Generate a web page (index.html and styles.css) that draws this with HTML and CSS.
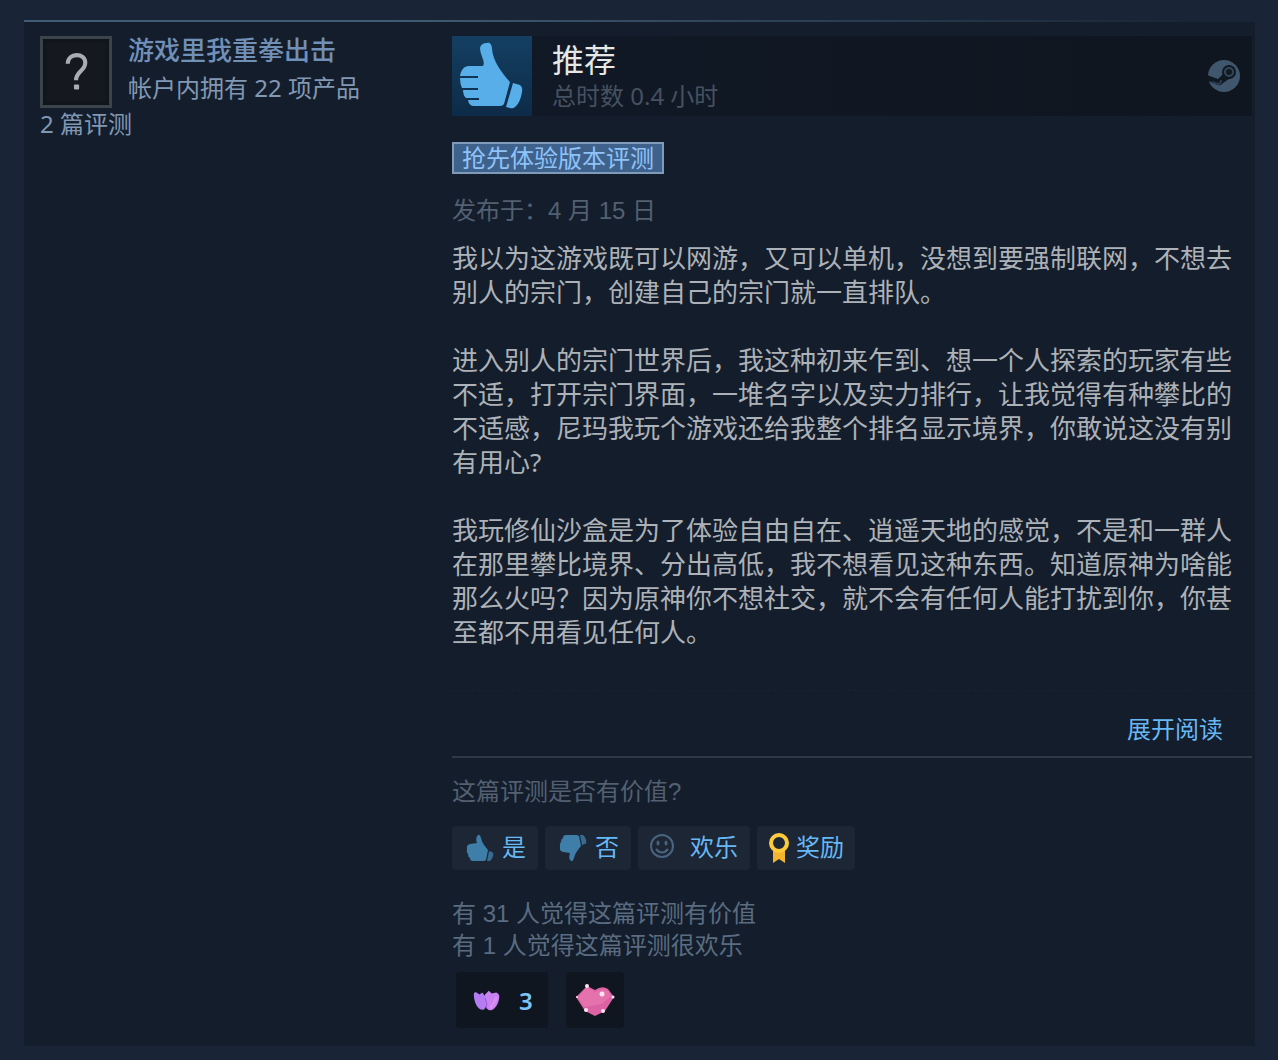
FILE: index.html
```html
<!DOCTYPE html>
<html lang="zh-CN">
<head>
  <meta charset="utf-8">
  <title>评测</title>
  <link rel="stylesheet" href="styles.css">
</head>
<body>
<svg width="0" height="0" class="defs">
  <symbol id="thumb" viewBox="0 0 80 80">
    <path d="M35 7C38 6 40 9 40 13C41 25 49 36 58 46L52 68Q51 70 48 70H22Q17 70 16 64H27V62H14Q11 59 11 54H26V52H10Q8 48 8 42H26V40H8C9 34 12 30 17 30H31C34 26 28 19 28 12Q29 7 35 7Z"/>
    <path d="M61 47L68 49Q71 51 70 56C69 63 66 69 63 71Q61 73 58 72L54 71Z"/>
  </symbol>
  <symbol id="thumb-small" viewBox="0 0 32 32">
    <path d="M14 3Q16 2 17 6C18 11 21 14 24 18L22 28Q21 29 19 29H9Q6 29 6 26Q4 25 4 22Q2 20 3 17Q2 13 6 12L13 11Q11 6 14 3Z"/>
    <path d="M25 19L28 20Q30 21 29 24Q28 28 26 29L23 29Z" opacity="0.8"/>
  </symbol>
</svg>

<div class="review">
  <div class="author">
    <a class="avatar" href="#" aria-label="头像">
      <svg viewBox="0 0 64 64">
        <path d="M24 24C24 13 41 13 41 23C41 31 32 31 32 40" fill="none" stroke="#a9adb3" stroke-width="4"/>
        <rect x="30" y="44" width="5" height="5" rx="1" fill="#a9adb3"/>
      </svg>
    </a>
    <a class="name" href="#">游戏里我重拳出击</a>
    <a class="owned" href="#">帐户内拥有 22 项产品</a>
    <a class="count" href="#">2 篇评测</a>
  </div>

  <div class="main">
    <a class="header" href="#">
      <svg class="thumb-big" viewBox="0 0 80 80"><use href="#thumb"/></svg>
      <div class="header-text">
        <div class="title">推荐</div>
        <div class="hours">总时数 0.4 小时</div>
      </div>
      <svg class="steam" viewBox="0 0 34 34">
        <circle cx="17" cy="17" r="16" fill="#40566c"/>
        <path d="M0 16L11 20L16 15L25 18L16 24Q13 28 9 25L1 22Z" fill="#101822"/>
        <circle cx="22" cy="13" r="7" fill="#101822"/>
        <circle cx="22" cy="13" r="4" fill="none" stroke="#33475b" stroke-width="2"/>
        <path d="M5 23L11 25Q14 25 14 21" fill="none" stroke="#2a3b4c" stroke-width="2"/>
      </svg>
    </a>

    <div class="early-access">抢先体验版本评测</div>
    <div class="posted">发布于：4 月 15 日</div>

    <div class="content">
      <p>我以为这游戏既可以网游，又可以单机，没想到要强制联网，不想去别人的宗门，创建自己的宗门就一直排队。</p>
      <p>进入别人的宗门世界后，我这种初来乍到、想一个人探索的玩家有些不适，打开宗门界面，一堆名字以及实力排行，让我觉得有种攀比的不适感，尼玛我玩个游戏还给我整个排名显示境界，你敢说这没有别有用心?</p>
      <p>我玩修仙沙盒是为了体验自由自在、逍遥天地的感觉，不是和一群人在那里攀比境界、分出高低，我不想看见这种东西。知道原神为啥能那么火吗？因为原神你不想社交，就不会有任何人能打扰到你，你甚至都不用看见任何人。</p>
    </div>

    <div class="more"><a href="#">展开阅读</a></div>

    <div class="question">这篇评测是否有价值?</div>
    <div class="votes">
      <button type="button"><svg class="icon" viewBox="0 0 32 32"><use href="#thumb-small"/></svg>是</button>
      <button type="button"><svg class="icon down" viewBox="0 0 32 32"><use href="#thumb-small"/></svg>否</button>
      <button type="button" class="funny">
        <svg class="icon" viewBox="0 0 32 32">
          <g fill="none" stroke="#49647e" stroke-width="2">
            <circle cx="16" cy="14" r="11"/>
            <path d="M10 17Q16 24 22 17"/>
          </g>
          <ellipse cx="12" cy="11" rx="1.5" ry="2.5" fill="#49647e"/>
          <ellipse cx="20" cy="11" rx="1.5" ry="2.5" fill="#49647e"/>
        </svg>欢乐
      </button>
      <button type="button" class="award">
        <svg class="icon" viewBox="0 0 22 32">
          <path d="M5 18H17V31L11 27L5 31Z" fill="#f3b52e"/>
          <circle cx="11" cy="11" r="8" fill="#1c2635" stroke="#ffc93c" stroke-width="4"/>
        </svg>奖励
      </button>
    </div>

    <div class="stats">有 31 人觉得这篇评测有价值<br>有 1 人觉得这篇评测很欢乐</div>

    <div class="awards">
      <button type="button" class="given" aria-label="3 个奖励">
        <svg viewBox="0 0 32 32">
          <path d="M3 10Q3 7 6 8L9 10L12 8Q15 11 16 15Q18 22 14 26C8 28 3 19 3 10Z" fill="#b57cf2"/>
          <path d="M15 10L19 6L22 9L27 8Q31 10 30 14C29 21 25 27 20 27C15 26 14 17 15 10Z" fill="#c682f2"/>
          <path d="M20 25Q25 20 27 13" fill="none" stroke="#dc8df0" stroke-width="3"/>
          <path d="M15 14Q18 20 16 25" fill="none" stroke="#8f55cc"/>
        </svg>
        <span>3</span>
      </button>
      <button type="button" class="given" aria-label="1 个奖励">
        <svg class="heart" viewBox="0 0 40 34">
          <path d="M1 14L12 3L20 7Q27 2 33 6L39 14L30 28L20 33L10 28Z" fill="#dc62a4"/>
          <path d="M3 14L12 4L20 9Q27 4 33 8L36 13L27 21L9 24Z" fill="#e672ad"/>
          <g fill="#ffe3f2">
            <circle cx="2" cy="14" r="1"/><circle cx="12" cy="3" r="2"/><circle cx="27" cy="11" r="2.5"/>
            <circle cx="38" cy="14" r="1.5"/><circle cx="11" cy="27" r="2"/><circle cx="28" cy="28" r="2"/>
          </g>
        </svg>
      </button>
    </div>
  </div>
</div>
</body>
</html>
```

FILE: styles.css
```css
body {
  margin: 0;
  padding: 20px 23px 14px 24px;
  background-color: #192536;
  font-family: "Noto Sans", "Noto Sans CJK SC", sans-serif;
  font-size: 24px;
  line-height: 32px;
  color: #8198b5;
}

a {
  color: inherit;
  text-decoration: none;
}

svg {
  display: block;
  flex-shrink: 0;
}

.defs {
  position: absolute;
}

.review {
  display: grid;
  grid-template-columns: 412px 1fr;
  padding: 14px 3px 18px 16px;
  border-top: 2px solid;
  border-image: linear-gradient(to right, #405b73 30%, #192536 95%) 1;
  background-color: #141d2b;
}

.author {
  display: grid;
  grid-template-columns: 72px 1fr;
  grid-template-rows: 32px 40px 34px;
  column-gap: 16px;
  align-content: start;
}

.avatar {
  grid-row: 1 / 3;
  box-sizing: border-box;
  height: 72px;
  border: 3px solid #3b444c;
  background-color: #15191f;
  box-shadow: inset 0 0 4px #0a0e13;
}

.name {
  font-size: 26px;
  line-height: 28px;
  font-weight: 500;
  color: #7190b8;
}

.owned {
  line-height: 40px;
}

.count {
  grid-column: 1 / 3;
}

.header {
  display: flex;
  height: 80px;
  background: linear-gradient(to right, #111927, #0f161f);
}

.thumb-big {
  width: 80px;
  height: 80px;
  background: linear-gradient(to bottom, #143f62, #0d2b48);
  fill: #58aee8;
}

.header-text {
  flex: 1;
  margin-left: 20px;
}

.title {
  font-size: 32px;
  line-height: 48px;
  color: #e6e8e6;
}

.hours {
  line-height: 24px;
  color: #465160;
}

.steam {
  width: 34px;
  height: 34px;
  margin: 23px 11px 0 0;
}

.early-access {
  box-sizing: border-box;
  width: fit-content;
  margin-top: 26px;
  padding: 0 8px;
  border: 2px solid #809ab9;
  background-color: #3f628c;
  line-height: 28px;
  color: #8fc3f8;
}

.posted,
.question,
.stats {
  font-family: "Liberation Sans", "Noto Sans CJK SC", sans-serif;
  color: #526071;
}

.posted {
  margin-top: 21px;
}

.content {
  margin-top: 14px;
  padding-bottom: 41px;
  border-bottom: 1px dashed #192231;
  font-size: 26px;
  line-height: 34px;
  color: #acb2b8;
}

.content p {
  margin: 0 0 34px;
}

.content p:last-child {
  margin: 0;
}

.more {
  padding: 22px 29px 11px 0;
  border-bottom: 2px solid #2f3846;
  text-align: right;
  color: #67b8f4;
}

.question {
  margin-top: 18px;
}

.votes {
  display: flex;
  gap: 7px;
  margin-top: 18px;
}

.votes button {
  display: flex;
  align-items: center;
  gap: 6px;
  height: 44px;
  padding: 0 12px 6px;
  border: none;
  border-radius: 4px;
  background-color: #1c2635;
  font-family: inherit;
  font-size: 24px;
  color: #67b8f4;
  cursor: pointer;
}

.icon {
  width: 32px;
  height: 32px;
  margin-top: 6px;
  fill: #3f7ea8;
}

.down {
  transform: scaleY(-1);
}

.votes .funny {
  gap: 12px;
  padding: 0 12px 6px 8px;
}

.award .icon {
  width: 22px;
}

.votes .award {
  padding: 0 11px 6px;
}

.stats {
  margin-top: 28px;
  color: #5a6c81;
}

.awards {
  display: flex;
  gap: 18px;
  margin: 10px 4px 0;
}

.given {
  display: flex;
  align-items: center;
  gap: 18px;
  height: 56px;
  padding: 0 15px;
  border: none;
  border-radius: 4px;
  background-color: #0f1620;
  font-family: inherit;
  font-size: 24px;
  font-weight: 600;
  color: #7cc4fa;
  cursor: pointer;
}

.given svg {
  width: 30px;
  height: 30px;
}

.given .heart {
  width: 40px;
  height: 34px;
  margin: 0 -6px;
}
```
